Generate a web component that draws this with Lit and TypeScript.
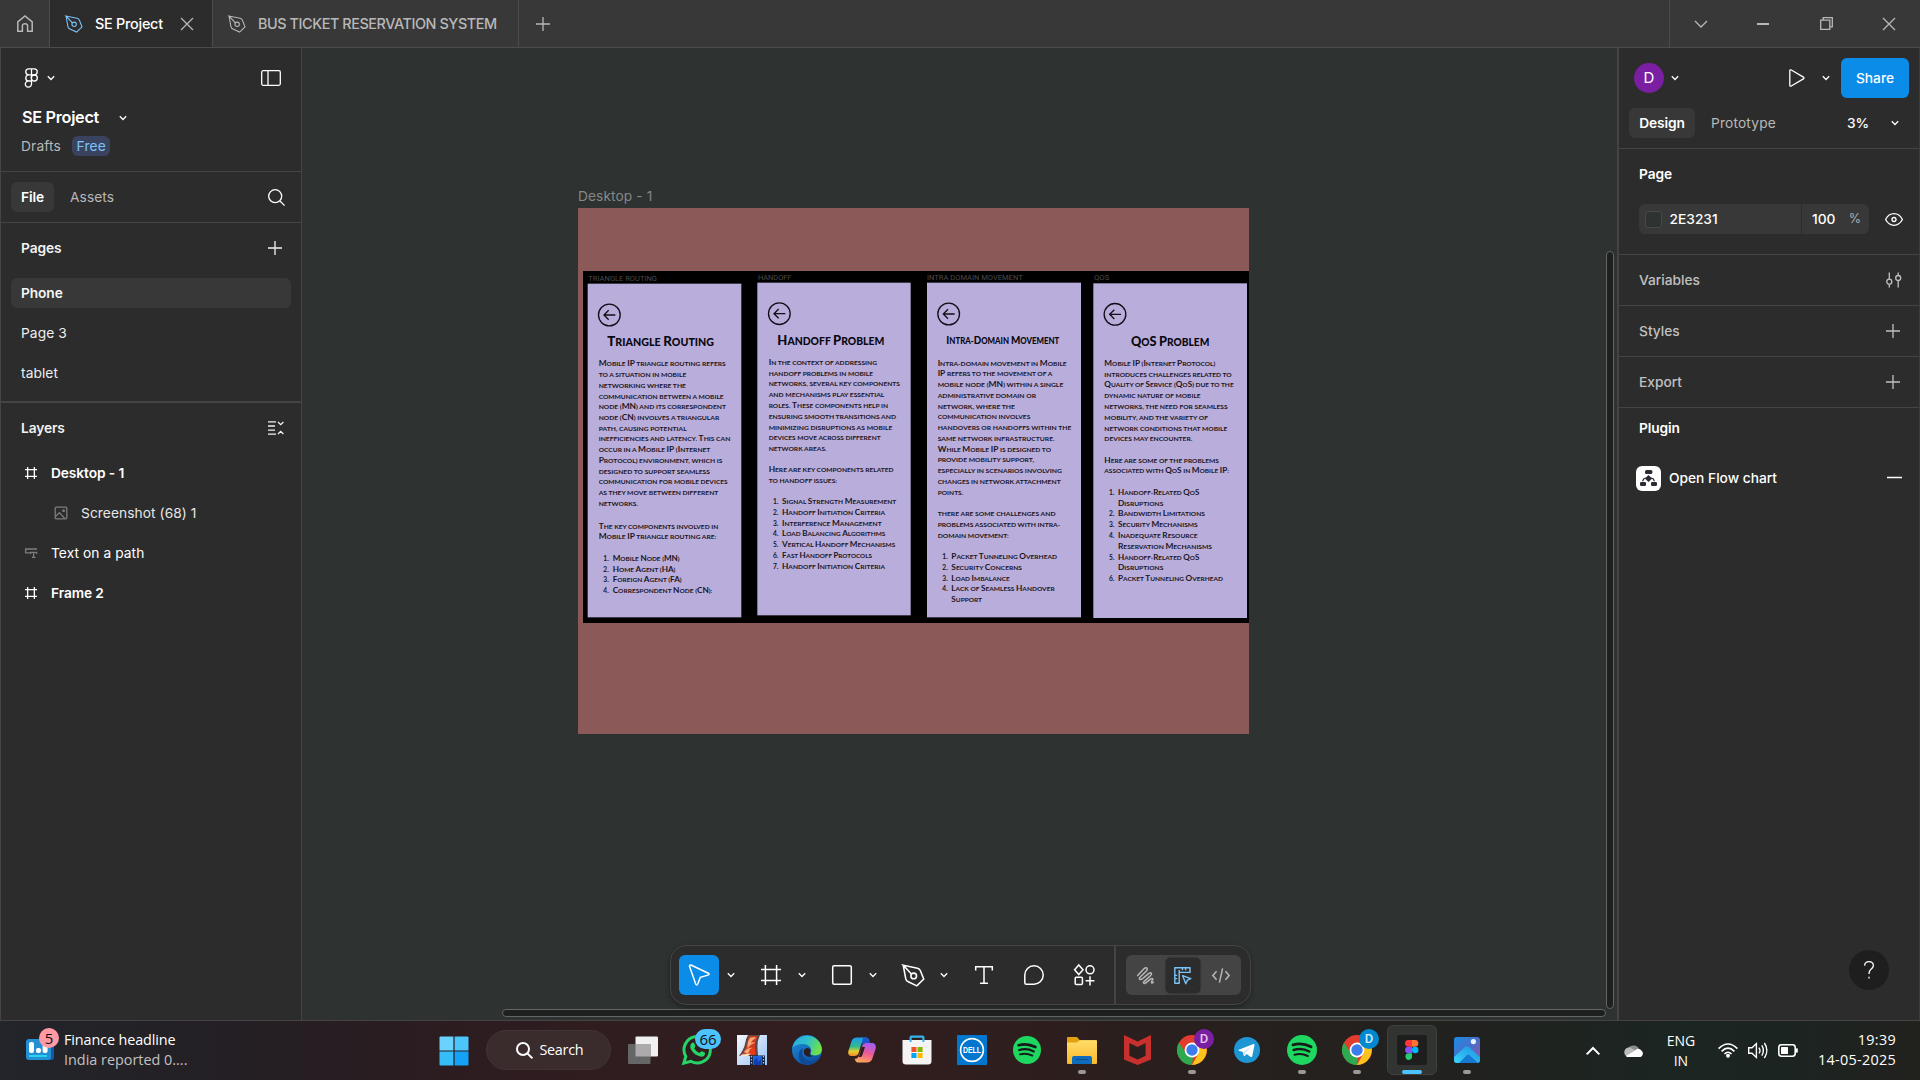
import { LitElement, html, svg, css, nothing } from "lit";
import { customElement } from "lit/decorators.js";

const box = (w: number, h: number, body: unknown, cls = "") =>
  html`<svg class="ic ${cls}" width=${w} height=${h} viewBox="0 0 ${w} ${h}">${body}</svg>`;

const chevron = (cls = "") =>
  box(10, 6, svg`<path d="M1.8 1.3 5 4.5 8.2 1.3" />`, cls);

const plus = (n: number, cls = "") =>
  box(n, n, svg`<path d="M${n / 2} 0V${n}M0 ${n / 2}H${n}" />`, cls);

const pen = (s: number, cls = "") => html`<svg class="ic ${cls}" width=${s} height=${s} viewBox="0 0 22 22">
  <path d="M1.2 1.2 3.6 14.2Q4 16.2 6 17L14.2 20.9 20.8 14.4 17.6 6.4Q16.8 4.4 14.8 4L1.2 1.2 9 9.6" />
  <circle cx="11.2" cy="11.4" r="2.7" />
</svg>`;

const frameIcon = (n: number, cls = "") => {
  const a = n * 0.22, b = n * 0.78;
  return box(n, n, svg`<path d="M${a} 0V${n}M${b} 0V${n}M0 ${a}H${n}M0 ${b}H${n}" />`, cls);
};

type Line = [string, number, number, number];
interface Card {
  label: Line;
  rect: [number, number, number, number];
  back: [number, number];
  title: Line;
  titleSize: number;
  body: Line[];
  nums: [string, number][];
  numX: number;
}

const lines = (x: number, rows: [string, number, number][]): Line[] =>
  rows.map(([t, x1, y]) => [t, x, x1, y]);

const cards: Card[] = [
  {
    label: ["TRIANGLE ROUTING", 16, 222, 22],
    rect: [14, 38, 461, 1001],
    back: [79, 132],
    title: ["Triangle Routing", 73, 393, 212],
    titleSize: 42,
    body: [
      ...lines(47, [
        ["Mobile IP triangle routing refers", 428, 278],
        ["to a situation in mobile", 310, 310],
        ["networking where the", 309, 343],
        ["communication between a mobile", 422, 375],
        ["node (MN) and its correspondent", 429, 407],
        ["node (CN) involves a triangular", 409, 439],
        ["path, causing potential", 311, 472],
        ["inefficiencies and latency. This can", 442, 503],
        ["occur in a Mobile IP (Internet", 382, 535],
        ["Protocol) environment, which is", 418, 568],
        ["designed to support seamless", 381, 600],
        ["communication for mobile devices", 434, 632],
        ["as they move between different", 406, 665],
        ["networks.", 165, 697],
        ["The key components involved in", 406, 765],
        ["Mobile IP triangle routing are:", 400, 797],
      ]),
      ...lines(89, [
        ["Mobile Node (MN)", 290, 862],
        ["Home Agent (HA)", 277, 894],
        ["Foreign Agent (FA)", 296, 926],
        ["Correspondent Node (CN):", 388, 958],
      ]),
    ],
    nums: [["1.", 862], ["2.", 894], ["3.", 926], ["4.", 958]],
    numX: 61,
  },
  {
    label: ["HANDOFF", 525, 625, 18],
    rect: [523, 35, 460, 998],
    back: [589, 128],
    title: ["Handoff Problem", 583, 904, 209],
    titleSize: 42,
    body: [
      ...lines(557, [
        ["In the context of addressing", 882, 274],
        ["handoff problems in mobile", 870, 306],
        ["networks, several key components", 951, 338],
        ["and mechanisms play essential", 904, 370],
        ["roles. These components help in", 915, 403],
        ["ensuring smooth transitions and", 939, 435],
        ["minimizing disruptions as mobile", 928, 468],
        ["devices move across different", 893, 500],
        ["network areas.", 731, 532],
        ["Here are key components related", 932, 596],
        ["to handoff issues:", 762, 628],
      ]),
      ...lines(597, [
        ["Signal Strength Measurement", 940, 692],
        ["Handoff Initiation Criteria", 906, 724],
        ["Interference Management", 896, 756],
        ["Load Balancing Algorithms", 907, 788],
        ["Vertical Handoff Mechanisms", 937, 820],
        ["Fast Handoff Protocols", 867, 852],
        ["Handoff Initiation Criteria", 906, 885],
      ]),
    ],
    nums: [["1.", 692], ["2.", 724], ["3.", 756], ["4.", 788], ["5.", 820], ["6.", 852], ["7.", 885]],
    numX: 570,
  },
  {
    label: ["INTRA DOMAIN MOVEMENT", 1032, 1319, 18],
    rect: [1032, 35, 462, 1004],
    back: [1097, 129],
    title: ["Intra-Domain Movement", 1090, 1429, 204],
    titleSize: 34,
    body: [
      ...lines(1064, [
        ["Intra-domain movement in Mobile", 1451, 276],
        ["IP refers to the movement of a", 1408, 308],
        ["mobile node (MN) within a single", 1441, 340],
        ["administrative domain or", 1359, 372],
        ["network, where the", 1296, 405],
        ["communication involves", 1342, 437],
        ["handovers or handoffs within the", 1465, 469],
        ["same network infrastructure.", 1415, 502],
        ["While Mobile IP is designed to", 1404, 534],
        ["provide mobility support,", 1353, 566],
        ["especially in scenarios involving", 1437, 599],
        ["changes in network attachment", 1433, 631],
        ["points.", 1141, 663],
        ["there are some challenges and", 1418, 727],
        ["problems associated with intra-", 1432, 760],
        ["domain movement:", 1277, 792],
      ]),
      ...lines(1105, [
        ["Packet Tunneling Overhead", 1422, 856],
        ["Security Concerns", 1317, 888],
        ["Load Imbalance", 1280, 921],
        ["Lack of Seamless Handover", 1415, 953],
        ["Support", 1197, 985],
      ]),
    ],
    nums: [["1.", 856], ["2.", 888], ["3.", 921], ["4.", 953]],
    numX: 1078,
  },
  {
    label: ["QOS", 1533, 1579, 18],
    rect: [1531, 37, 461, 1004],
    back: [1596, 130],
    title: ["QoS Problem", 1644, 1879, 211],
    titleSize: 42,
    body: [
      ...lines(1564, [
        ["Mobile IP (Internet Protocol)", 1897, 277],
        ["introduces challenges related to", 1946, 309],
        ["Quality of Service (QoS) due to the", 1952, 341],
        ["dynamic nature of mobile", 1853, 374],
        ["networks, the need for seamless", 1934, 406],
        ["mobility, and the variety of", 1875, 438],
        ["network conditions that mobile", 1933, 471],
        ["devices may encounter.", 1828, 503],
        ["Here are some of the problems", 1908, 567],
        ["associated with QoS in Mobile IP:", 1938, 599],
      ]),
      ...lines(1605, [
        ["Handoff-Related QoS", 1849, 664],
        ["Disruptions", 1741, 696],
        ["Bandwidth Limitations", 1866, 728],
        ["Security Mechanisms", 1844, 761],
        ["Inadequate Resource", 1844, 793],
        ["Reservation Mechanisms", 1887, 825],
        ["Handoff-Related QoS", 1849, 858],
        ["Disruptions", 1741, 890],
        ["Packet Tunneling Overhead", 1920, 922],
      ]),
    ],
    nums: [["1.", 664], ["2.", 728], ["3.", 761], ["4.", 793], ["5.", 858], ["6.", 922]],
    numX: 1578,
  },
];

/* The placed screenshot: drawn at three units per pixel. */
@customElement("phone-sheet")
class PhoneSheet extends LitElement {
  static styles = css`
    :host { display: block; line-height: 0; }
    text { font-family: Lato, "Open Sans", sans-serif; fill: #1a1523; }
    .label { font: 21px Roboto, sans-serif; fill: #4b4b4b; }
    .title, .body { text-transform: uppercase; }
    .title { font-weight: 900; fill: #0a0810; }
    .body { font-weight: 700; }
    .num { font-weight: 700; font-size: 20px; }
    .card { fill: #b9addb; }
    .back { fill: none; stroke: #120e18; stroke-width: 4; }
  `;

  private line(l: Line, cls: string, shift: number) {
    const [t, x0, x1, y] = l;
    return svg`<text class=${cls} x=${x0} y=${y + shift}
      textLength=${x1 - x0} lengthAdjust="spacingAndGlyphs">${t}</text>`;
  }

  /* Small caps with a taller lowercase than the browser synthesises. */
  private caps(l: Line, cls: string, shift: number, size: number) {
    const [t, x0, x1, y] = l;
    const runs = t.match(/[A-Z]+|[^A-Z]+/g) ?? [];
    return svg`<text class=${cls} x=${x0} y=${y + shift} font-size=${size * 0.8}
      textLength=${x1 - x0} lengthAdjust="spacingAndGlyphs">${runs.map((r) =>
        /[A-Z]/.test(r) ? svg`<tspan font-size=${size}>${r}</tspan>` : svg`<tspan>${r}</tspan>`)}</text>`;
  }

  render() {
    return html`<svg width="666" height="352" viewBox="0 0 1998 1056">
      <rect width="1998" height="1056" fill="#000" />
      ${cards.map((c) => svg`
        ${this.line(c.label, "label", 8)}
        <rect class="card" x=${c.rect[0]} y=${c.rect[1]} width=${c.rect[2]} height=${c.rect[3]} />
        <g class="back">
          <circle cx=${c.back[0]} cy=${c.back[1]} r="32.5" />
          <path d="M${c.back[0] + 18} ${c.back[1]}h-34m14 -14l-14 14l14 14" />
        </g>
        ${this.caps(c.title, "title", 14, c.titleSize * 0.93)}
        ${c.body.map((l) => this.caps(l, "body", 8, 23.5))}
        ${c.nums.map(([n, y]) => svg`<text class="num" x=${c.numX} y=${y + 8}>${n}</text>`)}
      `)}
    </svg>`;
  }
}

const ui = css`
  :host, * { box-sizing: border-box; }
  .ic { display: block; flex: none; fill: none; stroke: currentColor; stroke-width: 1.3; overflow: visible; }
  .row { display: flex; align-items: center; }
  .grow { flex: 1; }
`;

@customElement("tab-bar")
class TabBar extends LitElement {
  static styles = [ui, css`
    :host { display: flex; height: 48px; background: #383838; border-bottom: 1px solid #4c4c4c; color: #b8b8b8;
      font: 500 14.4px/18px Inter, sans-serif; }
    .tab { border-right: 1px solid #4c4c4c; height: 47px; }
    .home { width: 50px; padding-left: 17px; }
    .on { width: 163px; background: #2c2c2c; color: #fff; padding: 0 19px 0 15px; letter-spacing: -0.25px; }
    .on .blue { color: #7cc4f8; margin-right: 12px; }
    .x { color: #b8b8b8; }
    .two { width: 306px; padding-left: 15px; letter-spacing: -0.42px; white-space: nowrap; }
    .two .p { margin-right: 12px; }
    .add { padding-left: 17px; }
    .win { width: 251px; border-left: 1px solid #4c4c4c; padding: 0 25px; justify-content: space-between; }
  `];
  render() {
    return html`
      <div class="tab home row">${box(16, 17, svg`<path d="M.8 6.8 8 .9 15.2 6.8V16.2H10.6V10.6Q10.6 8.8 8 8.8T5.4 10.6V16.2H.8Z" stroke-width="1.5"/>`)}</div>
      <div class="tab on row">${pen(18, "blue")}<span class="grow">SE Project</span>${box(12, 12, svg`<path d="M0 0 12 12M12 0 0 12"/>`, "x")}</div>
      <div class="tab two row">${pen(18, "p")}<span>BUS TICKET RESERVATION SYSTEM</span></div>
      <div class="row add">${plus(14)}</div>
      <div class="grow"></div>
      <div class="win row">
        ${box(12, 6, svg`<path d="M0 0 6 6 12 0"/>`)}
        ${box(12, 2, svg`<path d="M0 1H12" stroke-width="2"/>`)}
        ${box(13, 13, svg`<path d="M.7 3.2H9.8V12.3H.7ZM3.2 3V.7H12.3V9.8H10"/>`)}
        ${box(12, 12, svg`<path d="M0 0 12 12M12 0 0 12"/>`)}
      </div>`;
  }
}

@customElement("left-panel")
class LeftPanel extends LitElement {
  static styles = [ui, css`
    :host { display: block; background: #2c2c2c; border-left: 1px solid #444; border-right: 1px solid #444; color: #fff;
      font: 400 13.75px/20px Inter, sans-serif; letter-spacing: 0.07px; }
    .head { height: 124px; padding: 15px 20px 0 20px; border-bottom: 1px solid #444; }
    .brand { height: 30px; padding-left: 4px; }
    .brand .c1 { margin-left: 8px; }
    .file { height: 29px; margin-top: 9px; padding-left: 1px; font-size: 16.25px; font-weight: 600; letter-spacing: -0.3px; }
    .file .ic { margin: 2px 0 0 19px; }
    .draft { height: 20px; margin-top: 5px; color: #b8b8b8; }
    .free { margin-left: 11px; padding: 0 4.5px; background: #394360; color: #7cc4f8; border-radius: 6px; letter-spacing: .2px; }
    .draft { letter-spacing: .15px; }
    .tabs { height: 51px; padding: 0 16px 0 10px; border-bottom: 1px solid #444; }
    .pill { height: 30px; padding: 5px 10px; background: #383838; border-radius: 6px; font-weight: 600; letter-spacing: -0.1px; }
    .assets { margin-left: 16px; color: #b8b8b8; }
    .title { height: 50px; padding: 0 19px 0 20px; font-weight: 600; letter-spacing: -0.1px; color: #f2f2f2; }
    .title.lay { padding-right: 17px; }
    .pages { display: grid; gap: 10px; padding: 5px 10px 13px; border-bottom: 2px solid #444; color: #eee; }
    .page { height: 30px; padding: 5px 10px; border-radius: 6px; }
    .cur { background: #383838; font-weight: 600; color: #f5f5f5; letter-spacing: -0.1px; }
    .layer { height: 40px; padding-left: 24px; gap: 14px; }
    .strong { font-weight: 600; letter-spacing: -0.1px; }
    .kid { padding-left: 54px; color: #e6e6e6; }
    .dim { color: #7d7d7d; }
  `];
  render() {
    return html`
      <div class="head">
        <div class="row brand">
          ${box(13, 20, svg`<path d="M6.5.8H3.8a3 3 0 0 0 0 6.1H6.5ZM6.5.8H9.2a3 3 0 0 1 0 6.1H6.5ZM6.5 6.9H3.8a3 3 0 0 0 0 6.1H6.5ZM6.5 13H3.8a3.1 3.1 0 1 0 2.7 3.1Z"/><circle cx="9.3" cy="10" r="3"/>`)}
          ${chevron("c1")}<span class="grow"></span>
          ${box(20, 16, svg`<rect x=".7" y=".7" width="18.6" height="14.6" rx="1.5"/><path d="M7 1V15"/>`)}
        </div>
        <div class="row file"><span>SE Project</span>${chevron("")}</div>
        <div class="row draft"><span>Drafts</span><span class="free">Free</span></div>
      </div>
      <div class="row tabs"><span class="pill">File</span><span class="assets">Assets</span><span class="grow"></span>
        ${box(17, 17, svg`<circle cx="7.2" cy="7.2" r="6.5"/><path d="M12 12 16.6 16.6"/>`)}</div>
      <div class="row title"><span class="grow">Pages</span>${plus(14)}</div>
      <div class="pages"><div class="page cur">Phone</div><div class="page">Page 3</div><div class="page">tablet</div></div>
      <div class="row title lay"><span class="grow">Layers</span>
        ${box(16, 14, svg`<path d="M0 .8H8M0 5H7M0 9.2H7M0 13.2H8M10 1 12.7 3.7 15.4 1M10 13 12.7 10.3 15.4 13"/>`)}</div>
      <div class="row layer strong">${frameIcon(12)}<span>Desktop - 1</span></div>
      <div class="row layer kid">${box(12, 12, svg`<rect x=".2" y=".2" width="11.6" height="11.6" rx="1"/><path d="M.5 9.5 4.4 5.6 9.8 11.5M8 3.2H9.2V4.4H8Z"/>`, "dim")}<span>Screenshot (68) 1</span></div>
      <div class="row layer">${box(12, 10, svg`<path d="M12 1H.6V4.8H5M5.6 6V4.4H11.6V6M8.6 4.4V9.2M7 9.4H10.4"/>`, "dim")}<span>Text on a path</span></div>
      <div class="row layer strong">${frameIcon(12)}<span>Frame 2</span></div>`;
  }
}

@customElement("right-panel")
class RightPanel extends LitElement {
  static styles = [ui, css`
    :host { display: flex; flex-direction: column; background: #2c2c2c; border-left: 2px solid #444; border-right: 1px solid #3c3c3c; color: #fff;
      font: 500 13.75px/20px Inter, sans-serif; letter-spacing: 0; }
    .head { height: 101px; padding: 10px 10px 0 10px; border-bottom: 1px solid #444; }
    .top { height: 40px; padding-left: 5px; }
    .ava { width: 30px; height: 30px; border-radius: 50%; background: #7b1fa2; display: grid; place-items: center; font-size: 15px; font-weight: 400; margin-right: 6px; }
    .play { margin-right: 16.5px; }
    .share { margin-left: 10px; width: 68px; height: 40px; border-radius: 6px; background: #0c8ce9; display: grid; place-items: center; }
    .modes { height: 30px; margin-top: 10px; padding-right: 9px; }
    .design { height: 30px; width: 66px; text-align: center; padding: 5px 0; background: #383838; border-radius: 6px; font-weight: 600; letter-spacing: -0.15px; }
    .proto { margin-left: 16px; color: #b8b8b8; font-weight: 400; letter-spacing: .15px; }
    .zoom { margin-right: 21px; letter-spacing: -.2px; }
    .page { height: 106px; border-bottom: 1px solid #444; padding: 0 16px 0 20px; }
    .cap { height: 50px; font-weight: 600; letter-spacing: -0.1px; }
    .fill { height: 30px; margin-top: 5px; }
    .hex { width: 162px; height: 30px; background: #383838; border-radius: 6px 0 0 6px; padding-left: 6px; gap: 7.5px; }
    .sw { width: 17px; height: 17px; background: #2e3231; border: 1px solid #474a49; border-radius: 3px; }
    .pct { width: 67px; height: 30px; margin-left: 1px; background: #383838; border-radius: 0 6px 6px 0; padding: 0 8px 0 10px; justify-content: space-between; }
    .pct i { font-style: normal; font-weight: 400; font-size: 12.5px; color: #b0b0b0; }
    .sec { height: 51px; padding: 0 19px 0 20px; border-bottom: 1px solid #444; color: #c0c0c0; }
    .sec.v { padding-right: 17px; }
    .plug { height: 40px; padding-left: 20px; font-weight: 600; letter-spacing: -0.1px; }
    .app { height: 60px; padding: 0 17px; gap: 8px; }
    .logo { width: 25px; height: 25px; border-radius: 6px; background: #fff; display: grid; place-items: center; }
    .logo .ic { fill: #2b2b35; stroke: none; }
    .foot { margin-top: auto; height: 70px; padding-left: 230px; }
    .help { width: 40px; height: 40px; border-radius: 50%; background: #1e1e1e; display: grid; place-items: center; }
  `];
  render() {
    return html`
      <div class="head">
        <div class="row top"><span class="ava">D</span>${chevron("")}<span class="grow"></span>
          ${box(16, 18, svg`<path d="M.8 1.8V16.2Q.9 17.7 2.3 17L14.4 9.9Q15.6 9 14.4 8.1L2.3 1Q.9.3.8 1.8Z"/>`, "play")}
          ${chevron("")}<span class="share">Share</span></div>
        <div class="row modes"><span class="design">Design</span><span class="proto">Prototype</span><span class="grow"></span><span class="zoom">3%</span>${chevron("")}</div>
      </div>
      <div class="page">
        <div class="row cap">Page</div>
        <div class="row fill"><div class="row hex"><span class="sw"></span>2E3231</div><div class="row pct">100<i>%</i></div><span class="grow"></span>
          ${box(18, 13, svg`<path d="M.6 6.5Q3.6.7 9 .7T17.4 6.5Q14.4 12.3 9 12.3T.6 6.5Z"/><circle cx="9" cy="6.5" r="2"/>`)}</div>
      </div>
      <div class="row sec v"><span class="grow">Variables</span>${box(16, 16, svg`<path d="M3.3.5V7M3.3 12.4V15.5M12.2.5V3.4M12.2 8.8V15.5"/><circle cx="3.3" cy="9.7" r="2.5"/><circle cx="12.2" cy="6" r="2.5"/>`)}</div>
      <div class="row sec"><span class="grow">Styles</span>${plus(14)}</div>
      <div class="row sec"><span class="grow">Export</span>${plus(14)}</div>
      <div class="row plug">Plugin</div>
      <div class="row app"><span class="logo">${box(17, 17, svg`<rect x="5" y="0" width="7.4" height="4" rx="1.6"/><path d="M8.5 5 12.2 8.6 8.5 12 4.8 8.6ZM5.6 7.2 3 11.4 2 11Q2.6 8 5.6 7.2ZM11.4 7.2 14 11.4 15 11Q14.4 8 11.4 7.2Z"/><rect x="0" y="12" width="6" height="4" rx="1.3"/><rect x="11" y="12" width="6" height="4" rx="1.3"/>`)}</span>
        <span class="grow">Open Flow chart</span>${box(15, 2, svg`<path d="M0 .5H15" stroke-width="1.5"/>`)}</div>
      <div class="foot"><div class="help">${box(10, 18, svg`<path d="M.6 4.6Q.9.7 5 .7T9.4 4.6Q9.4 6.6 7 8.2 5 9.6 5 13M5 15.8V17.6"/>`)}</div></div>`;
  }
}

@customElement("tool-bar")
class ToolBar extends LitElement {
  static styles = [ui, css`
    :host { display: flex; align-items: center; width: 581px; height: 60px; border-radius: 16px; background: #2c2c2c; border: 1px solid #454545;
      box-shadow: 0 2px 5px rgba(0,0,0,.35); color: #fff; padding-left: 8px; }
    .ic { stroke-width: 1.5; }
    .cell { width: 40px; height: 40px; display: grid; place-items: center; }
    .sel { background: #0c8ce9; border-radius: 6px; margin-right: 1.5px; }
    .down { width: 31px; height: 40px; display: grid; place-items: center start; padding-left: 5.5px; }
    .down .ic { stroke-width: 1.3; }
    .t { margin-left: -0.5px; } .m { margin-left: 10.5px; } .a { margin-left: 9.5px; }
    .bar { width: 2px; height: 58px; background: #444; margin-left: 10px; }
    .group { margin-left: 10px; width: 115px; height: 40px; border-radius: 6px; background: #444; color: #b8b8b8; display: flex; align-items: center; justify-content: space-between; padding: 0 10.5px 0 11px; }
    .mid { width: 34px; height: 35px; border-radius: 5px; background: #2c2c2c; color: #7cc4f8; display: grid; place-items: center; box-shadow: 0 0 2px #111; }
    .mid .ic { stroke-width: 1.4; }
  `];
  render() {
    return html`
      <div class="cell sel">${box(22, 22, svg`<path d="M1.6 2.6 7.7 20Q8.7 22 9.7 20L12.3 13.4 20 11.1Q22 10.3 20.3 9.2L3 1Q1.2.6 1.6 2.6Z"/>`)}</div><div class="down">${chevron("")}</div>
      <div class="cell">${frameIcon(20)}</div><div class="down">${chevron("")}</div>
      <div class="cell">${box(20, 20, svg`<rect x=".7" y=".7" width="18.6" height="18.6" rx="1.5"/>`)}</div><div class="down">${chevron("")}</div>
      <div class="cell">${pen(23)}</div><div class="down">${chevron("")}</div>
      <div class="cell t">${box(18, 18, svg`<path d="M.7 4.4V.8H17.3V4.4M9 .8V17.2M5 17.2H13"/>`)}</div>
      <div class="cell m">${box(20, 20, svg`<path d="M.8 10A9.2 9.2 0 1 1 10 19.2H2.3Q.8 19.2.8 17.7Z"/>`)}</div>
      <div class="cell a">${box(20, 20, svg`<path d="M4.8 0 9 4.8 4.8 9.6.6 4.8ZM16 11.2V20.4M11.6 15.8H20.4"/><rect x="1.2" y="12.2" width="7.2" height="7.4" rx="1"/><circle cx="16" cy="4.8" r="4"/>`)}</div>
      <div class="bar"></div>
      <div class="group">
        ${box(17, 17, svg`<path stroke-linecap="round" stroke-linejoin="round" d="M.7 8.6 7.2 1.6Q9.2-.2 10.2 1.4 10.8 2.6 9.2 4.2L3.2 10Q1.8 11.6 2.8 12.4 3.8 13 5.6 11.6L11.6 6.6Q13.6 5.2 14.4 6.2 15 7.2 13.4 8.8L7.2 14.4Q6 15.6 6.8 16.2 7.6 16.8 9.2 15.6L13 12.4Q15 11 15.8 11.8 16.2 12.4 15 13.8 14 15.4 14.6 15.8 15.2 16.2 16.4 15.2"/>`)}
        <div class="mid">${box(17, 17, svg`<path d="M16 5.4V.8H.8V16.2H5.2V5.4ZM5.2 5.4V3M8.4 1V3.2M11.6 1V3.2M1 8.4H3.2M1 11.6H3.2M8.6 8.6 16.8 11.6 13.4 13.2 11.8 16.8Z" stroke-linejoin="round"/>`)}</div>
        ${box(18, 15, svg`<path d="M4.6 3.2.8 7.5 4.6 11.8M13.4 3.2 17.2 7.5 13.4 11.8M10.6.4 7.4 14.6"/>`)}
      </div>`;
  }
}

const windows = box(30, 30, svg`<g stroke="none"><path fill="#6bd2fb" d="M.5 1.5 Q.5.5 1.5.5H14.4V14.4H.5Z"/><path fill="#4cc5fa" d="M15.6.5H28.5Q29.5.5 29.5 1.5V14.4H15.6Z"/><path fill="#35bdf8" d="M.5 15.6H14.4V29.5H1.5Q.5 29.5.5 28.5Z"/><path fill="#14a2f7" d="M15.6 15.6H29.5V28.5Q29.5 29.5 28.5 29.5H15.6Z"/></g>`);

const whatsapp = box(30, 30, svg`<path d="M1.8 28.2 3.8 21.4A13.2 13.2 0 1 1 8.8 26.3Z" stroke="#25d366" stroke-width="3"/><path d="M10.2 7.8Q11.6 7 12.4 8.6L13.4 11Q13.6 12 12.2 13.2 14 16.8 17.4 18L19 16.4Q19.8 16 20.6 16.4L22.8 17.6Q23.6 18.6 22.4 20.4 20 22.8 15.6 20.6 10.8 18.4 8.6 13.4 7.4 9.8 10.2 7.8Z" fill="#25d366" stroke="none"/>`);

const film = box(30, 30, svg`<defs><linearGradient id="fb" x1="0" y1="0" x2="1" y2="1"><stop offset="0" stop-color="#f4f8ff"/><stop offset="1" stop-color="#9cc3f4"/></linearGradient></defs>
  <g stroke="none"><rect width="30" height="30" fill="url(#fb)"/>
  <path fill="#5b4644" d="M11 0H23Q20 6 20.4 12L21 21H2Q7 14 8 9 9 3 11 0Z"/>
  <path fill="#cf3d1e" d="M12 1H20.4Q18 7 18 12L18.6 20H5Q9 14 10 9Z"/>
  <path fill="#f8a878" d="M13 3Q17 1.6 19.4 3 15 4.6 14 8 17 6.4 18 8 13 9 10.8 13.6 9.6 8 13 3ZM7 17Q11 12 16 13 12 14.8 11 19Z"/>
  <path fill="#ee3a18" d="M12 14.6Q16 12 18 13.4L18.4 19 13 20Q15 16.6 12 14.6Z"/>
  <path fill="#fbe0c8" d="M5 19.4 14 18.6 11 21H3Z"/>
  <rect x="13" y="20.5" width="15" height="9.5" fill="#13233c"/><rect x="16" y="21" width="9" height="9" fill="#1e63e8"/><path fill="#0d3fb0" d="M17 26 20 22 21 27 24 24V30H17Z"/><path stroke="#9cc3f4" stroke-dasharray="1.5 1.5" d="M14.5 21V30M26.5 21V30"/></g>`);

const edge = box(30, 30, svg`<defs><linearGradient id="e1" x1="0" y1="0" x2="1" y2=".3"><stop offset="0" stop-color="#2aa6e0"/><stop offset=".55" stop-color="#2fc2c8"/><stop offset="1" stop-color="#6ee04a"/></linearGradient><linearGradient id="e2" x1="0" y1="0" x2=".6" y2="1"><stop offset="0" stop-color="#1f93e0"/><stop offset="1" stop-color="#0c4fa0"/></linearGradient></defs>
  <g stroke="none"><circle cx="15" cy="15" r="15" fill="url(#e2)"/><path fill="url(#e1)" d="M.3 13A15 15 0 0 1 30 14.6Q29.6 20.4 23.4 20.6 18 20.4 18.6 17.8 20 15.4 18.4 12.6 15.6 8.6 10 9 3.4 9.4.3 13Z"/><path fill="#0f4a94" d="M11 13Q8 22 15.6 25.6 21 27.6 27.6 23.2 22 30.4 14.4 30 6 28 6.8 19.4 7.6 15 11 13Z"/><path fill="#2c1c20" d="M12.2 14.6Q14.8 11.8 17.6 13.8 19.6 16.2 17.8 18.6 17.4 20.2 20 21.4 15 22.4 12.6 19.4 11.2 17 12.2 14.6Z"/></g>`);

const copilot = box(28, 26, svg`<defs><linearGradient id="c1" x1="0" y1="0" x2="0" y2="1"><stop offset="0" stop-color="#1a9cf0"/><stop offset=".5" stop-color="#36b98c"/><stop offset=".75" stop-color="#e6d02a"/><stop offset="1" stop-color="#f58a2a"/></linearGradient><linearGradient id="c2" x1=".6" y1="0" x2=".3" y2="1"><stop offset="0" stop-color="#a45cf5"/><stop offset=".5" stop-color="#ec5a92"/><stop offset="1" stop-color="#ffa95c"/></linearGradient></defs>
  <g stroke="none"><path fill="url(#c1)" d="M9 .5H18Q20.5.5 21.4 4H17Q14 4 13 8L10.6 16Q9.8 19 6.6 19H3Q-.6 18.6.4 14L3.6 4Q4.8.5 9 .5Z"/><path fill="#1a56d0" d="M15 .5H18Q20.5.5 21.4 4L22 6H17Q14.5 6 13.4 9Z"/><path fill="url(#c2)" d="M19 25.5H10Q7.5 25.5 6.6 21.6 10 22 11.2 18L14.6 8Q15.6 6 18 6H25Q28.6 7 27.6 12L24.4 21.6Q23 25.5 19 25.5Z"/><path fill="#2d1d1e" d="M13.8 10H17L14 19Q13.6 20 12.4 20H10.6Q11.4 19 11.8 17Z"/></g>`);

const store = box(30, 30, svg`<path d="M8.6 7V2.6Q8.6 1.6 9.6 1.6H20.4Q21.4 1.6 21.4 2.6V7" stroke="#31b4ef" stroke-width="2.2"/><g stroke="none"><path fill="#f4f4f4" d="M.5 5H29.5V26Q29.5 29.5 26 29.5H4Q.5 29.5.5 26Z"/><path fill="#31b4ef" d="M7.6 5H9.6V7H7.6ZM20.4 5H22.4V7H20.4Z"/><path fill="#f25022" d="M9.4 12H14.5V17H9.4Z"/><path fill="#7fba00" d="M15.5 12H20.6V17H15.5Z"/><path fill="#00a4ef" d="M9.4 18H14.5V23H9.4Z"/><path fill="#ffb900" d="M15.5 18H20.6V23H15.5Z"/></g>`);

const dell = box(30, 30, svg`<rect width="30" height="30" fill="#0076ce" stroke="none"/><circle cx="15" cy="15" r="11.4" stroke="#fff" stroke-width="1.6"/><text class="dell" x="6" y="17.9" textLength="18" lengthAdjust="spacingAndGlyphs">DELL</text>`);

const spotify = (n: number) => html`<svg class="ic" width=${n} height=${n} viewBox="0 0 28 28"><circle cx="14" cy="14" r="14" fill="#1ed760" stroke="none"/><g stroke="#161b17" stroke-linecap="round"><path stroke-width="2.7" d="M5.6 9.2Q14.4 6.8 22.4 11"/><path stroke-width="2.3" d="M6.2 14Q14 11.8 20.8 15.4"/><path stroke-width="1.9" d="M7 18.4Q13.6 16.6 19.4 19.6"/></g></svg>`;

const folder = box(30, 27, svg`<defs><linearGradient id="f1" x1="0" y1="0" x2="0" y2="1"><stop offset="0" stop-color="#ffdd6a"/><stop offset="1" stop-color="#fbb92a"/></linearGradient></defs><g stroke="none"><path fill="#e3a010" d="M0 1Q0 0 1 0H9Q10.4 0 11.4 1.4L12.6 3H29Q30 3 30 4V10H0Z"/><path fill="url(#f1)" d="M0 5.6H9Q10.6 5.6 12.6 3.2H29Q30 3.2 30 4.2V26Q30 27 29 27H1Q0 27 0 26Z"/><path fill="#0f6cbd" d="M5 27V21Q5 19 7 19H23Q25 19 25 21V27Z"/><path fill="#0a4f94" d="M9 22H21V23H9Z"/></g>`);

const mcafee = box(27, 30, svg`<path fill="#c8302e" stroke="none" fill-rule="evenodd" d="M0 0 13.5 6.4 27 0V24.4L13.5 30 0 24.4ZM5.4 8V20.8L13.5 24.6 21.6 20.8V8L13.5 12Z"/>`);

const chrome = box(30, 30, svg`<g stroke="none"><circle cx="15" cy="15" r="15" fill="#e33b2e"/><path fill="#2da94f" d="M2 7.5 9 18.6 16 21.4 15 30A15 15 0 0 1 2 7.5Z"/><path fill="#fcc31e" d="M28 7.8H15L21.4 18.6 15 30A15 15 0 0 0 28 7.8Z"/><circle cx="15" cy="15" r="7.4" fill="#fff"/><circle cx="15" cy="15" r="5.7" fill="#3b7ded"/></g>`);

const telegram = box(26, 26, svg`<g stroke="none"><circle cx="13" cy="13" r="13" fill="#1e96d4"/><path fill="#fff" d="M4.8 12.8 19.4 7Q20.8 6.6 20.5 8.2L18.2 19.2Q17.8 20.6 16.4 19.8L12.6 17 10.6 18.9Q9.8 19.4 9.6 18.2L8.8 14.9 4.9 13.8Q4 13.4 4.8 12.8Z"/><path fill="#c4dcea" d="M9.4 15.2 17.4 9.4 11 15.8 10.4 18.6Z"/></g>`);

const figma = box(30, 30, svg`<g stroke="none"><rect width="30" height="30" rx="2" fill="#1e1e1e"/><path fill="#ff3737" d="M15 5H11.4a3.3 3.3 0 0 0 0 6.7H15Z"/><path fill="#ff7237" d="M15 5H18a3.3 3.3 0 0 1 0 6.7H15Z"/><path fill="#874fff" d="M15 11.7H11.4a3.3 3.3 0 0 0 0 6.6H15Z"/><circle cx="18.2" cy="15" r="3.3" fill="#00b6ff"/><path fill="#24cb71" d="M15 18.3H11.4a3.3 3.3 0 1 0 3.6 3.3Z"/></g>`);

const photos = box(26, 26, svg`<defs><linearGradient id="p1" x1="0" y1="0" x2="1" y2="1"><stop offset="0" stop-color="#1a8ce6"/><stop offset=".5" stop-color="#4a6ec8"/><stop offset="1" stop-color="#9a4f9e"/></linearGradient><linearGradient id="p2" x1="0" y1="1" x2="1" y2="0"><stop offset="0" stop-color="#3ad4fa"/><stop offset="1" stop-color="#1b8fe4"/></linearGradient></defs><g stroke="none"><rect width="26" height="26" rx="3" fill="url(#p1)"/><path fill="url(#p2)" d="M0 20 11 10Q13 8.4 15 10L26 20V23Q26 26 23 26H3Q0 26 0 23Z"/><path fill="#1678d0" d="M5 26 13 18Q14 17 15.4 18L24 26Z"/><circle cx="19.4" cy="4.6" r="2.6" fill="#e6f2fb"/></g>`);

const taskview = box(30, 28, svg`<g stroke="none"><rect x="7.5" y=".5" width="22.5" height="20" rx="1" fill="#f0f0f0"/><rect x="0" y="8" width="22.5" height="20" rx="1" fill="#666" /><rect x="7.5" y="8" width="15" height="12.5" fill="#acaaaa"/></g>`);

interface App { icon: unknown; run?: "dot" | "on"; badge?: string; kind?: string }
const apps: App[] = [
  { icon: taskview },
  { icon: whatsapp, badge: "66", kind: "count" },
  { icon: film },
  { icon: edge },
  { icon: copilot },
  { icon: store },
  { icon: dell },
  { icon: spotify(28) },
  { icon: folder, run: "dot" },
  { icon: mcafee },
  { icon: chrome, run: "dot", badge: "D", kind: "purple" },
  { icon: telegram },
  { icon: spotify(30), run: "dot" },
  { icon: chrome, run: "dot", badge: "D", kind: "azure" },
  { icon: figma, run: "on" },
  { icon: photos, run: "dot" },
];

@customElement("task-bar")
class TaskBar extends LitElement {
  static styles = [ui, css`
    :host { display: flex; height: 60px; border-top: 1px solid #454343; color: #fff; font: 400 14.4px/20px "Open Sans", "Noto Sans", sans-serif;
      background: linear-gradient(90deg, #22252a 0, #241f24 240px, #2d1c20 480px, #321e1f 800px, #2e1e1d 1020px, #26201e 1250px, #20221f 1500px, #1b2522 1680px, #1c2421 1800px, #22211e 1920px); }
    .news { width: 429px; padding: 0 0 2px 26px; gap: 10px; white-space: nowrap; align-self: center; }
    .wid { position: relative; }
    .five { position: absolute; left: 13px; top: -11px; width: 20px; height: 20px; border-radius: 50%; background: #ff99a4; color: #111; text-align: center; line-height: 20px; font-size: 15px; }
    .sub { color: #c4c0c1; }
    .l1 { letter-spacing: -0.12px; } .sub { letter-spacing: 0; }
    .start { width: 50px; display: grid; place-items: center; }
    .search { width: 125px; height: 40px; margin: 9px 6.5px 0 6.5px; border-radius: 20px; background: #3a2b2d; border: 1px solid #423335; padding-left: 29px; gap: 7px; letter-spacing: -.3px; }
    .search .ic { stroke-width: 2; }
    .apps { gap: 5px; padding-bottom: 1px; }
    .app { position: relative; width: 50px; height: 50px; display: grid; place-items: center; border-radius: 6px; border: 1px solid transparent; }
    .app:first-child { margin: 0 -1px 0 1px; }
    .app.on { background: #323431; border-color: #3f413e; }
    .run { position: absolute; bottom: 0; left: 20px; width: 8px; height: 4px; border-radius: 2px; background: #9b9997; }
    .run.on { left: 14px; width: 20px; background: #4cc2ff; }
    .badge { position: absolute; left: 26px; top: 3px; width: 20px; height: 20px; border-radius: 10px; text-align: center; font: 500 13px/20px Roboto, sans-serif; }
    .count { left: 22px; width: 26px; background: #4cc2ff; color: #111; font: 400 15px/20px "Open Sans", sans-serif; }
    .purple { background: #7b1fa2; color: #e3c6ee; } .azure { background: #0288d1; color: #d0ecfa; }
    .dell { font: 700 8.5px "Liberation Sans", sans-serif; fill: #fff; stroke: none; }
    .tray { white-space: nowrap; }
    .lang { width: 30px; text-align: center; margin: 0 22px 0 23px; font-size: 14px; }
    .cloud { margin-left: 23px; }
    .clock { text-align: right; margin: 0 24px 1px 20px; letter-spacing: .3px; }
    .g10 { margin-left: 10px; }
  `];
  render() {
    return html`
      <div class="row news"><div class="wid">${box(28, 21, svg`<g stroke="none"><rect x="4" y="1" width="24" height="20" rx="3" fill="#0f59a8"/><rect width="25" height="21" rx="3" fill="#2490d4"/><rect x="3" y="3" width="5" height="11" rx="2" fill="#fff"/><rect x="10" y="9" width="5" height="5" rx="2" fill="#fff"/><rect x="16.6" y="5" width="5" height="9" rx="2" fill="#fff"/><rect x="3" y="16" width="18" height="2" fill="#27d5ef"/></g>`)}<span class="five">5</span></div>
        <div><div class="l1">Finance headline</div><div class="sub">India reported 0....</div></div></div>
      <div class="start">${windows}</div>
      <div class="row search">${box(17, 17, svg`<circle cx="7" cy="7" r="6"/><path d="M11.4 11.4 16.4 16.4"/>`)}<span>Search</span></div>
      <div class="row apps">${apps.map((a) => html`<div class="app ${a.run === "on" ? "on" : ""}">${a.icon}
        ${a.badge ? html`<span class="badge ${a.kind}">${a.badge}</span>` : nothing}
        ${a.run ? html`<span class="run ${a.run}"></span>` : nothing}</div>`)}</div>
      <span class="grow"></span>
      <div class="row tray">
        ${box(14, 8, svg`<path d="M.7 7.4 7 1 13.3 7.4" stroke-width="2"/>`)}
        ${box(20, 13, svg`<g stroke="none"><path fill="#8b8d8c" d="M5 4A6 5 0 0 1 16 5L10 9Z"/><path fill="#b9bbba" d="M3 12A4.4 4.4 0 1 1 9 4.6L15 8 6 13Z"/><path fill="#fff" d="M3 12 12 6.4Q14.6 3.6 17.6 5.8 21.4 8.6 19 12L17.6 13H4Z"/></g>`, "cloud")}
        <div class="lang">ENG<br />IN</div>
        ${box(20, 15, svg`<g stroke-width="1.6"><path d="M.6 5.6Q10-3.6 19.4 5.6M3.6 8.4Q10 2 16.4 8.4M6.4 11Q10 7.4 13.6 11"/></g><circle cx="10" cy="12.8" r="2" fill="#fff" stroke="none"/>`)}
        ${box(20, 17, svg`<g stroke-width="1.4"><path d="M.7 5.8H4L8.4 1.6V15.4L4 11.2H.7ZM11 5.6Q13 8.5 11 11.4M13.8 3.4Q17 8.5 13.8 13.6M16.4 1Q21.4 8.5 16.4 16"/></g>`, "g10")}
        ${box(20, 13, svg`<rect x=".8" y=".8" width="16.4" height="11.4" rx="2.6" stroke-width="1.6"/><path d="M18.6 4.4V8.6" stroke-width="2.4"/><rect x="3" y="3" width="7" height="7" rx=".6" fill="#fff" stroke="none"/>`, "g10")}
        <div class="clock">19:39<br />14-05-2025</div>
      </div>`;
  }
}

@customElement("app-root")
class AppRoot extends LitElement {
  static styles = css`
    :host { display: grid; grid-template-rows: 48px 972px 60px; width: 1920px; height: 1080px; overflow: hidden; background: #2c2c2c; }
    .main { display: grid; grid-template-columns: 302px 1315px 303px; }
    .canvas { position: relative; background: #2e3231; overflow: hidden; }
    .name { position: absolute; left: 276px; top: 138px; font: 400 13.75px/20px Inter, sans-serif; color: #858786; letter-spacing: 0.08px; }
    .frame { position: absolute; left: 276px; top: 160px; width: 671px; height: 525.5px; background: #8c5959; padding: 63px 0 0 5px; box-sizing: border-box; }
    .tools { position: absolute; left: 367.5px; top: 897px; }
    .sb { position: absolute; box-sizing: border-box; background: #1e201f; border: 1px solid #626665; border-radius: 4px; }
    .v { left: 1304px; top: 203px; width: 8px; height: 758px; }
    .h { left: 200px; top: 961px; width: 1104px; height: 8px; }
  `;
  render() {
    return html`
      <tab-bar></tab-bar>
      <div class="main">
        <left-panel></left-panel>
        <div class="canvas">
          <div class="name">Desktop - 1</div>
          <div class="frame"><phone-sheet></phone-sheet></div>
          <div class="sb v"></div><div class="sb h"></div>
          <tool-bar class="tools"></tool-bar>
        </div>
        <right-panel></right-panel>
      </div>
      <task-bar></task-bar>`;
  }
}
